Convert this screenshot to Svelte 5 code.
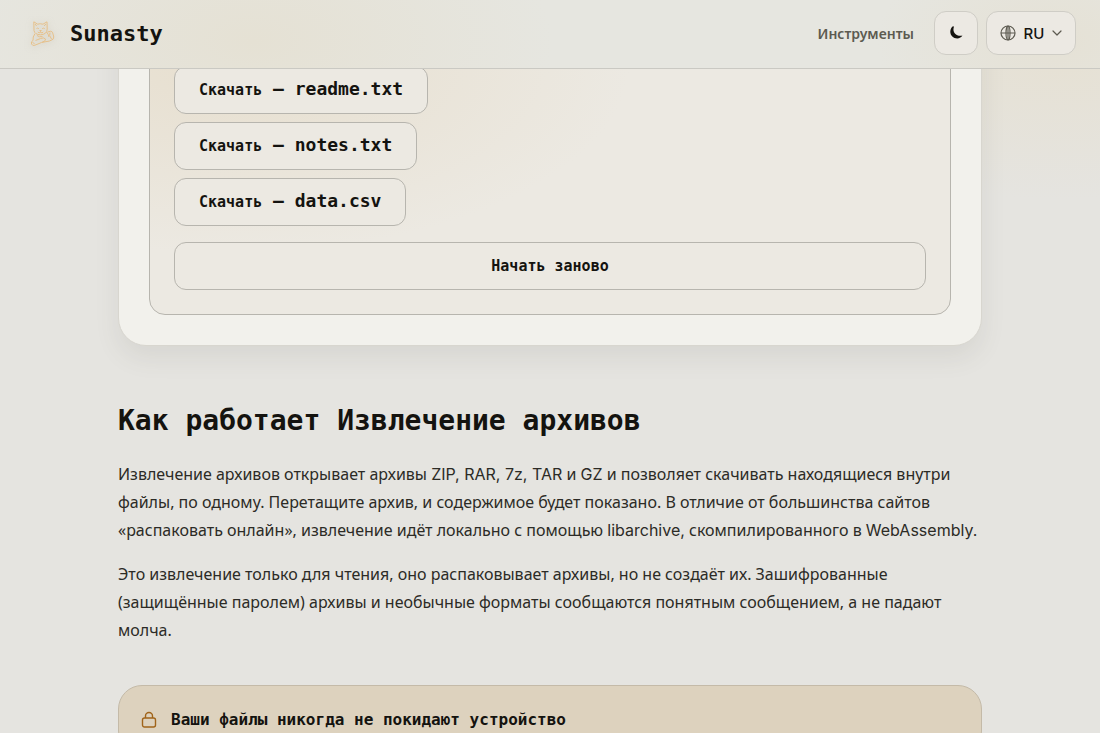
<script lang="ts">
	const files = ['readme.txt', 'notes.txt', 'data.csv']
</script>

<header class="site-header">
	<a class="brand" href="/">
		<svg class="logo" viewBox="0 0 28 28" aria-hidden="true">
			<path d="M6 11.500 5.800 2.800 9.600 5.200Q12 4.300 15 5.200L19 2.800 19.200 10Q19 15.500 12.500 15.800 6.500 15.500 6 11.500Z" />
			<path d="M7 5 8.600 7M17.800 5 16.200 7M8.500 9.500Q9.600 8.600 10.800 9.700M14.200 9.700Q15.500 8.600 16.700 9.500M11.700 11.500H13.300L12.500 12.400ZM12.500 12.400V13.300M9.800 13Q11 14.500 12.500 13.300 14 14.500 15.300 13" />
			<path d="M7 14.500Q4.500 18 5 21.500M18.500 13Q20.500 15 21 18M5 21.500Q2.600 22.500 3.500 25 4.500 27.200 7 26.200L13.500 23.500 21.500 22Q26.500 20.500 25.800 18L24.500 13.200Q23.500 11.300 19.500 13" />
			<path d="M7.500 21.500 12.500 19.500Q16 18 17.500 20 18.200 22 14 23.300M9 16.500Q11 18.500 14.500 17.500M22 13.500Q20.500 16.500 23.500 20M4.500 23.500 6.500 24.500" />
		</svg>
		<span>Sunasty</span>
	</a>
	<nav>
		<a class="nav-link" href="/tools">Инструменты</a>
		<button class="control theme" type="button" aria-label="Тёмная тема">
			<svg width="16" height="16" viewBox="0 0 16 16" aria-hidden="true">
				<path d="M4.600 1.500C.9 4.800 1.800 11.200 6.500 12.900c3.300 1.200 6.600.1 7.900-2.400C9.800 12 3.900 8.100 5.800 2.200 6 1.500 5.200 1 4.600 1.500Z" fill="currentColor" />
			</svg>
		</button>
		<button class="control language" type="button">
			<svg width="16" height="16" viewBox="0 0 16 16" fill="none" stroke="currentColor" stroke-width="1.200" aria-hidden="true">
				<circle cx="8" cy="8" r="7" />
				<ellipse cx="8" cy="8" rx="2" ry="7" />
				<path d="M1 8h14M8 1v14" />
			</svg>
			<span>RU</span>
			<svg class="chevron" width="10" height="10" viewBox="0 0 10 10" fill="none" stroke="currentColor" stroke-width="1.200" aria-hidden="true">
				<path d="m1 3 4 4 4-4" stroke-linecap="round" stroke-linejoin="round" />
			</svg>
		</button>
	</nav>
</header>

<main>
	<section class="card">
		<div class="panel">
			<ul class="downloads">
				{#each files as file}
					<li>
						<button class="btn" type="button">Скачать<span class="file">{` — ${file}`}</span></button>
					</li>
				{/each}
			</ul>
			<button class="btn restart" type="button">Начать заново</button>
		</div>
	</section>

	<section class="about">
		<h2>Как работает Извлечение архивов</h2>
		<p>
			Извлечение архивов открывает архивы <span class="latin">ZIP, RAR, 7z, TAR</span> и <span class="latin">GZ</span> и позволяет скачивать находящиеся внутри файлы, по одному. Перетащите архив, и содержимое будет показано. В отличие от большинства сайтов «распаковать онлайн», извлечение идёт локально с помощью <span class="latin">libarchive,</span> скомпилированного в <span class="latin">WebAssembly.</span>
		</p>
		<p>
			Это извлечение только для чтения, оно распаковывает архивы, но не создаёт их. Зашифрованные (защищённые паролем) архивы и необычные форматы сообщаются понятным сообщением, а не падают молча.
		</p>
	</section>

	<section class="notice">
		<svg width="16" height="18" viewBox="0 0 16 18" fill="none" stroke="currentColor" stroke-width="1.400" aria-hidden="true">
			<rect x="1.500" y="7" width="13" height="9" rx="2" />
			<path d="M4.500 7V5a3.500 3.500 0 0 1 7 0v2" />
		</svg>
		<h3>Ваши файлы никогда не покидают устройство</h3>
	</section>
</main>

<style>
	:global(body) {
		margin: 0;
		background:
			radial-gradient(ellipse 300px 140px at 1060px 60px, #e6e1d4, transparent) no-repeat,
			#e5e4e0;
		color: #14130f;
		font-family: 'Noto Sans', sans-serif;
	}

	.site-header {
		position: sticky;
		top: 0;
		z-index: 1;
		display: flex;
		align-items: center;
		justify-content: space-between;
		box-sizing: border-box;
		height: 69px;
		padding: 0 24px 2px 28px;
		border-bottom: 1px solid #cac9c3;
		background:
			radial-gradient(ellipse 300px 150px at 23% 60%, #e5e1d4, transparent),
			radial-gradient(ellipse 180px 100px at 96% 60%, #e5e1d5, transparent),
			#e6e6e0;
	}

	.brand {
		display: flex;
		align-items: center;
		gap: 14px;
		color: inherit;
		font: bold 22px 'DejaVu Sans Mono', monospace;
		text-decoration: none;
	}

	.logo {
		width: 28px;
		height: 28px;
		fill: none;
		stroke: #e6c08a;
		stroke-linejoin: round;
		filter: drop-shadow(0 1px 3px #b9ae9a88);
	}

	nav {
		display: flex;
		align-items: center;
		gap: 8px;
	}

	.nav-link {
		margin-right: 12px;
		color: #5c5a50;
		font-size: 14px;
		font-weight: 600;
		text-decoration: none;
	}

	.control {
		display: flex;
		align-items: center;
		justify-content: center;
		height: 44px;
		border: 1px solid #cfcdc6;
		border-radius: 12px;
		background: #ece9e3;
		color: #14130f;
		font: 500 15px Inter, sans-serif;
	}

	.theme {
		width: 44px;
	}

	.language {
		gap: 8px;
		min-width: 90px;
		padding: 0 12px;
	}

	.language svg {
		color: #5c5a50;
	}

	main {
		max-width: 864px;
		margin: -59px auto 0;
	}

	.card {
		padding: 30px;
		border: 1px solid #d8d6cf;
		border-radius: 28px;
		background: #f2f1ec;
		box-shadow: 0 12px 24px #5a594618;
	}

	.panel {
		padding: 24px;
		border: 1px solid #b7b5ae;
		border-radius: 16px;
		background:
			radial-gradient(ellipse 400px 190px at 10% 8%, #e7dfcf, transparent),
			#ece9e2;
	}

	.downloads {
		display: flex;
		flex-direction: column;
		align-items: flex-start;
		gap: 8px;
		margin: 0 0 16px;
		padding: 0;
		list-style: none;
	}

	.btn {
		display: block;
		height: 48px;
		padding: 0 24px;
		border: 1px solid #b7b5ae;
		border-radius: 12px;
		background: #ece9e2;
		color: inherit;
		font: bold 15px 'DejaVu Sans Mono', monospace;
	}

	.file {
		font-size: 18px;
		line-height: 16px;
		white-space: pre;
	}

	.restart {
		width: 100%;
	}

	.about {
		margin: 57px 0 41px;
	}

	h2 {
		margin: 0 0 21px;
		font: bold 28px/36px 'DejaVu Sans Mono', monospace;
	}

	p {
		margin: 0 0 16px;
		color: #2c2b26;
		font-size: 16px;
		line-height: 28px;
	}

	.latin {
		font-family: Inter, sans-serif;
		line-height: 20px;
	}

	.notice {
		display: flex;
		align-items: center;
		gap: 14px;
		padding: 22px;
		border: 1px solid #c4baa8;
		border-radius: 24px;
		background: #ddd2be;
	}

	.notice svg {
		color: #a0641a;
	}

	h3 {
		margin: 0;
		font: bold 16px/24px 'DejaVu Sans Mono', monospace;
	}
</style>
